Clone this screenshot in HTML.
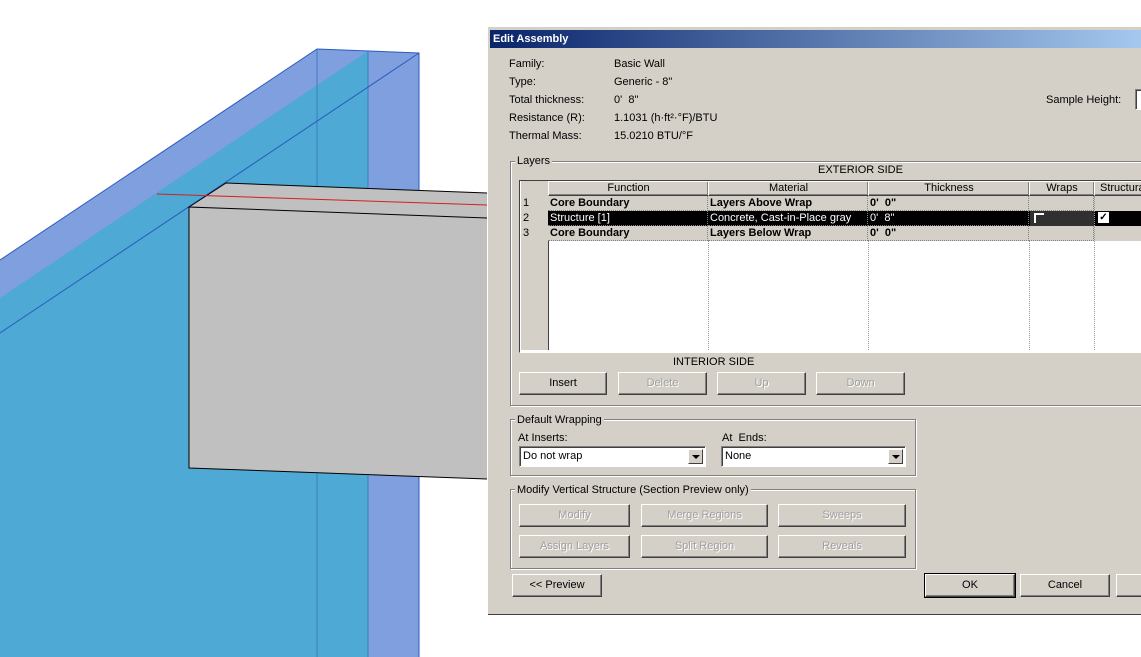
<!DOCTYPE html>
<html><head><style>
body{margin:0;width:1141px;height:657px;overflow:hidden;background:#fff;position:relative;font-family:"Liberation Sans",sans-serif;font-size:11px;color:#000}
.a{position:absolute;white-space:nowrap}
.dlg{position:absolute;left:487px;top:26px;width:660px;height:588px;background:#d4d0c8;border-left:1px solid #fff;border-top:1px solid #fff;box-shadow:inset -1px -1px 0 #404040;}
.title{position:absolute;left:490px;top:30px;width:660px;height:18px;background:linear-gradient(90deg,#0a246a,#a6caf0);color:#fff;font-weight:bold;font-size:11px;line-height:18px;padding-left:3px;box-sizing:border-box}
.btn{position:absolute;height:23px;box-sizing:border-box;border:1px solid;border-color:#fff #404040 #404040 #fff;box-shadow:inset -1px -1px 0 #808080;text-align:center;line-height:21px;background:#d4d0c8}
.dis{color:#a0a0a0;text-shadow:1px 1px 0 #fff}
.grp{position:absolute;border:1px solid #808080;box-shadow:1px 1px 0 #fff,inset 1px 1px 0 #fff}
.gl{position:absolute;background:#d4d0c8;padding:0 2px}
.sel{position:absolute;height:21px;box-sizing:border-box;background:#fff;border:1px solid;border-color:#808080 #fff #fff #808080;box-shadow:inset 1px 1px 0 #404040;line-height:19px;padding-left:3px}
.arr{position:absolute;right:2px;top:2px;width:15px;height:15px;box-sizing:border-box;background:#d4d0c8;border:1px solid;border-color:#fff #404040 #404040 #fff}
.arr:after{content:"";position:absolute;left:3px;top:5px;border-left:4px solid transparent;border-right:4px solid transparent;border-top:4px solid #000}
.cell{position:absolute;height:15px;line-height:14px;padding-left:2px;box-sizing:border-box;border-right:1px dotted #808080;border-bottom:1px dotted #808080}
.b{font-weight:bold}
</style></head><body>
<svg class="a" style="left:0;top:0" width="500" height="657">
<polygon points="0,260 317,49 419,53 419,657 0,657" fill="#4ea9d5"/>
<polygon points="0,260 317,49 368,51 0,298" fill="#7f9fdf"/>
<polygon points="368,51 419,53 419,657 368,657" fill="#7f9fdf"/>
<g stroke="#2a5bc0" stroke-width="1" fill="none">
<polyline points="0,260 317,49 419,53 419,657"/>
<line x1="317" y1="49" x2="317" y2="657" stroke="#3b7fc0"/>
<line x1="368" y1="51" x2="368" y2="657" stroke="#3b7fc0"/>
<line x1="0" y1="333" x2="419" y2="53"/>
</g>
<polygon points="226,183 487,193 487,479 189,468 189,207" fill="#c0c0c0"/>
<g stroke="#000" stroke-width="1" fill="none">
<polyline points="487,193 226,183 189,207 487,218"/>
<polyline points="189,207 189,468 487,479"/>
</g>
<line x1="157" y1="194" x2="487" y2="205" stroke="#d02020"/>
</svg>
<div class="dlg"></div>
<div class="title">Edit Assembly</div>
<div class="a" style="left:509px;top:58px">Family:</div><div class="a" style="left:614px;top:58px">Basic Wall</div>
<div class="a" style="left:509px;top:76px">Type:</div><div class="a" style="left:614px;top:76px">Generic - 8"</div>
<div class="a" style="left:509px;top:94px">Total thickness:</div><div class="a" style="left:614px;top:94px">0'&nbsp; 8"</div>
<div class="a" style="left:509px;top:112px">Resistance (R):</div><div class="a" style="left:614px;top:112px">1.1031 (h·ft²·°F)/BTU</div>
<div class="a" style="left:509px;top:130px">Thermal Mass:</div><div class="a" style="left:614px;top:130px">15.0210 BTU/°F</div>
<div class="a" style="left:1046px;top:94px">Sample Height:</div>
<div class="sel" style="left:1135px;top:89px;width:20px"></div>
<div class="grp" style="left:510px;top:161px;width:640px;height:243px"></div>
<div class="gl a" style="left:515px;top:155px">Layers</div>
<div class="a" style="left:818px;top:164px">EXTERIOR SIDE</div>
<div class="a" style="left:519px;top:180px;width:640px;height:171px;background:#fff;border:1px solid;border-color:#404040 #fff #fff #404040"></div>
<div class="a" style="left:521px;top:181px;width:27px;height:169px;background:#d4d0c8;border-right:1px solid #404040"></div>
<div class="btn" style="left:548px;top:181px;width:161px;height:15px;line-height:13px">Function</div>
<div class="btn" style="left:708px;top:181px;width:161px;height:15px;line-height:13px">Material</div>
<div class="btn" style="left:868px;top:181px;width:162px;height:15px;line-height:13px">Thickness</div>
<div class="btn" style="left:1029px;top:181px;width:66px;height:15px;line-height:13px">Wraps</div>
<div class="btn" style="left:1094px;top:181px;width:60px;height:15px;line-height:13px;text-align:left;padding-left:5px">Structural</div>
<div class="a" style="left:548px;top:196px;width:600px;height:15px;background:#d4d0c8"></div>
<div class="a" style="left:548px;top:211px;width:600px;height:15px;background:#000"></div>
<div class="a" style="left:548px;top:226px;width:600px;height:15px;background:#d4d0c8"></div>
<div class="a" style="left:523px;top:197px">1</div><div class="a" style="left:523px;top:212px">2</div><div class="a" style="left:523px;top:227px">3</div>
<div class="cell b" style="left:548px;top:196px;width:160px">Core Boundary</div>
<div class="cell b" style="left:708px;top:196px;width:160px">Layers Above Wrap</div>
<div class="cell b" style="left:868px;top:196px;width:161px">0'&nbsp; 0"</div>
<div class="cell" style="left:1029px;top:196px;width:65px"></div>
<div class="cell" style="left:548px;top:211px;width:160px;color:#fff">Structure [1]</div>
<div class="cell" style="left:708px;top:211px;width:160px;color:#fff">Concrete, Cast-in-Place gray</div>
<div class="cell" style="left:868px;top:211px;width:161px;color:#fff">0'&nbsp; 8"</div>
<div class="a" style="left:1030px;top:211px;width:64px;height:15px;background:#303030"></div>
<div class="a" style="left:1034px;top:213px;width:10px;height:10px;border-left:2px solid #fff;border-top:2px solid #fff;box-sizing:border-box"></div>
<div class="a" style="left:1098px;top:212px;width:11px;height:11px;background:#fff;color:#000;font-size:10px;line-height:11px;text-align:center;font-weight:bold">✓</div>
<div class="cell b" style="left:548px;top:226px;width:160px">Core Boundary</div>
<div class="cell b" style="left:708px;top:226px;width:160px">Layers Below Wrap</div>
<div class="cell b" style="left:868px;top:226px;width:161px">0'&nbsp; 0"</div>
<div class="cell" style="left:1029px;top:226px;width:65px"></div>
<div class="a" style="left:708px;top:241px;height:109px;border-left:1px dotted #999"></div>
<div class="a" style="left:868px;top:241px;height:109px;border-left:1px dotted #999"></div>
<div class="a" style="left:1029px;top:241px;height:109px;border-left:1px dotted #999"></div>
<div class="a" style="left:1094px;top:196px;height:154px;border-left:1px dotted #999"></div>
<div class="a" style="left:673px;top:356px">INTERIOR SIDE</div>
<div class="btn" style="left:519px;top:372px;width:88px">Insert</div>
<div class="btn dis" style="left:618px;top:372px;width:89px">Delete</div>
<div class="btn dis" style="left:717px;top:372px;width:89px">Up</div>
<div class="btn dis" style="left:816px;top:372px;width:89px">Down</div>
<div class="grp" style="left:510px;top:419px;width:404px;height:55px"></div>
<div class="gl a" style="left:515px;top:414px">Default Wrapping</div>
<div class="a" style="left:518px;top:432px">At Inserts:</div>
<div class="a" style="left:722px;top:432px">At&nbsp; Ends:</div>
<div class="sel" style="left:519px;top:446px;width:187px">Do not wrap<div class="arr"></div></div>
<div class="sel" style="left:721px;top:446px;width:185px">None<div class="arr"></div></div>
<div class="grp" style="left:510px;top:489px;width:404px;height:78px"></div>
<div class="gl a" style="left:515px;top:484px">Modify Vertical Structure (Section Preview only)</div>
<div class="btn dis" style="left:519px;top:504px;width:111px">Modify</div>
<div class="btn dis" style="left:641px;top:504px;width:127px">Merge Regions</div>
<div class="btn dis" style="left:778px;top:504px;width:128px">Sweeps</div>
<div class="btn dis" style="left:519px;top:535px;width:111px">Assign Layers</div>
<div class="btn dis" style="left:641px;top:535px;width:127px">Split Region</div>
<div class="btn dis" style="left:778px;top:535px;width:128px">Reveals</div>
<div class="btn" style="left:512px;top:574px;width:90px">&lt;&lt; Preview</div>
<div class="btn" style="left:925px;top:574px;width:90px;outline:1px solid #000">OK</div>
<div class="btn" style="left:1020px;top:574px;width:90px">Cancel</div>
<div class="btn" style="left:1116px;top:574px;width:90px"></div>
</body></html>
